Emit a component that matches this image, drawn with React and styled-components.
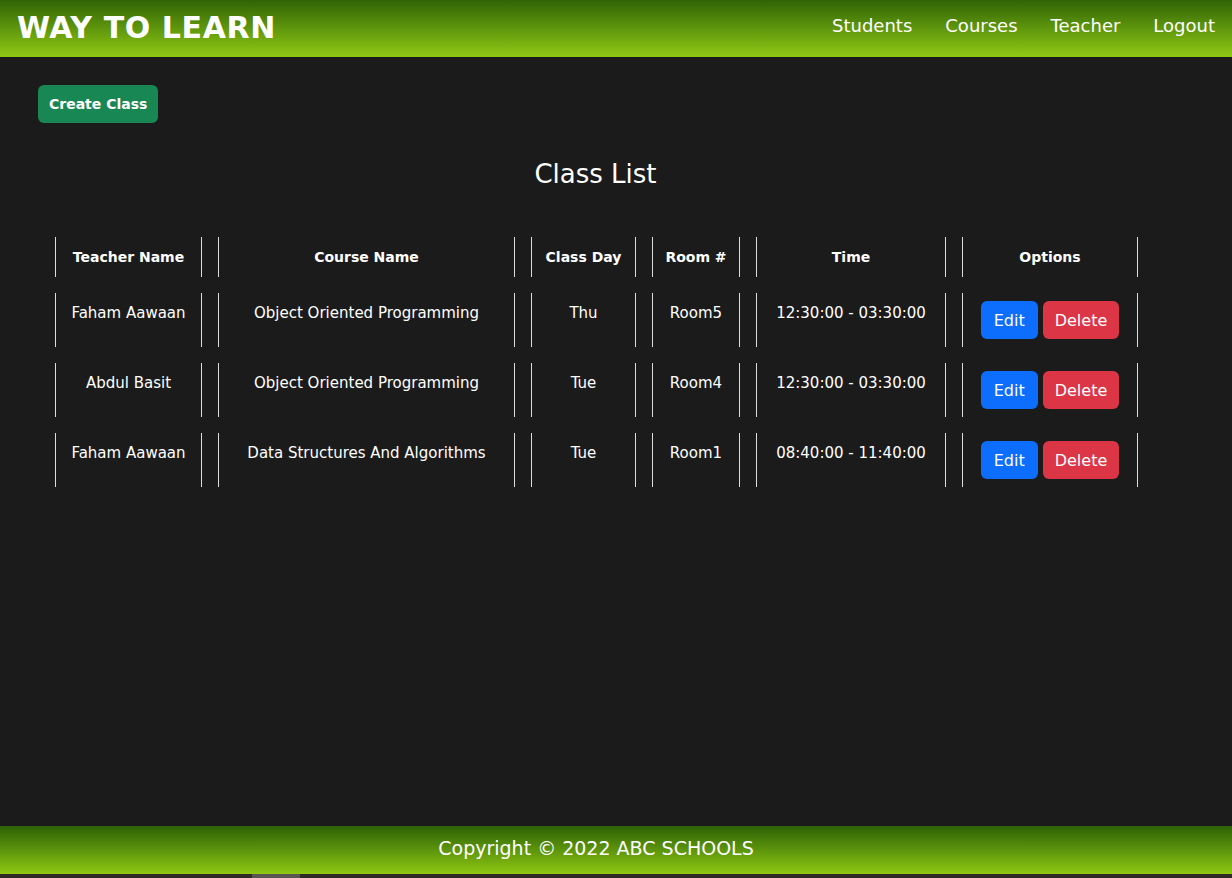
import React from 'react';
import styled, { createGlobalStyle } from 'styled-components';

const GlobalStyle = createGlobalStyle`
  html, body {
    margin: 0;
    padding: 0;
    background: #1b1b1b;
    font-family: 'Comic Sans MS', 'DejaVu Sans', sans-serif;
    color: #fff;
  }
`;

const Page = styled.div`
  min-height: 878px;
  display: flex;
  flex-direction: column;
`;

const Header = styled.header`
  height: 57px;
  display: flex;
  align-items: center;
  justify-content: space-between;
  padding: 0 17px;
  background: linear-gradient(to bottom, #2f6406, #90c914);
`;

const Brand = styled.div`
  font-size: 30px;
  font-weight: bold;
  letter-spacing: 0.6px;
  padding-bottom: 3px;
`;

const Nav = styled.nav`
  display: flex;
  gap: 33px;
  padding-bottom: 6px;
`;

const NavLink = styled.a`
  font-size: 18px;
  color: #fff;
  cursor: pointer;
`;

const Main = styled.main`
  flex: 1;
  padding: 28px 0 0 38px;
  width: 1115px;
`;

const Button = styled.button`
  font-family: inherit;
  font-size: ${({ $size }) => $size || 15}px;
  font-weight: ${({ $bold }) => ($bold ? 'bold' : 'normal')};
  color: #fff;
  border: none;
  border-radius: 6px;
  height: 38px;
  padding: 0 ${({ $pad }) => $pad || 12}px;
  background: ${({ $variant }) =>
    $variant === 'danger' ? '#dc3545' : $variant === 'primary' ? '#0d6efd' : '#198754'};
  cursor: pointer;
`;

const Title = styled.h2`
  margin: 36px 0 0;
  text-align: center;
  font-size: 26px;
  font-weight: normal;
`;

const Table = styled.table`
  margin-top: 32px;
  margin-left: 1px;
  width: 100%;
  border-collapse: separate;
  border-spacing: 16px 16px;
  table-layout: fixed;
`;

const Th = styled.th`
  border-left: 1px solid #ddd;
  border-right: 1px solid #ddd;
  height: 40px;
  padding: 0 4px;
  font-size: 14px;
  font-weight: bold;
  text-align: center;
  vertical-align: middle;
  box-sizing: border-box;
`;

const Td = styled.td`
  border-left: 1px solid #ddd;
  border-right: 1px solid #ddd;
  height: 54px;
  padding: 8px 4px;
  font-size: 15px;
  text-align: center;
  vertical-align: top;
  line-height: 24px;
  box-sizing: border-box;
`;

const Options = styled.div`
  display: flex;
  justify-content: center;
  gap: 5px;
`;

const Footer = styled.footer`
  height: 48px;
  display: flex;
  align-items: center;
  justify-content: center;
  padding: 0 40px 5px 0;
  box-sizing: border-box;
  font-size: 19px;
  background: linear-gradient(to bottom, #2c6206, #8ec713);
`;

const ScrollStrip = styled.div`
  height: 4px;
  background: #2e2a2a;
  padding-left: 252px;
`;

const Thumb = styled.div`
  width: 48px;
  height: 4px;
  background: #5a5555;
`;

const columns = [
  { label: 'Teacher Name', w: 147 },
  { label: 'Course Name', w: 297 },
  { label: 'Class Day', w: 105 },
  { label: 'Room #', w: 88 },
  { label: 'Time', w: 190 },
  { label: 'Options', w: 176 },
];

const classes = [
  { teacher: 'Faham Aawaan', course: 'Object Oriented Programming', day: 'Thu', room: 'Room5', time: '12:30:00 - 03:30:00' },
  { teacher: 'Abdul Basit', course: 'Object Oriented Programming', day: 'Tue', room: 'Room4', time: '12:30:00 - 03:30:00' },
  { teacher: 'Faham Aawaan', course: 'Data Structures And Algorithms', day: 'Tue', room: 'Room1', time: '08:40:00 - 11:40:00' },
];

export default function App() {
  return (
    <Page>
      <GlobalStyle />
      <Header>
        <Brand>WAY TO LEARN</Brand>
        <Nav>
          <NavLink>Students</NavLink>
          <NavLink>Courses</NavLink>
          <NavLink>Teacher</NavLink>
          <NavLink>Logout</NavLink>
        </Nav>
      </Header>
      <Main>
        <Button $size={14} $bold $pad={11}>Create Class</Button>
        <Title>Class List</Title>
        <Table>
          <colgroup>
            {columns.map((c) => (
              <col key={c.label} style={{ width: c.w }} />
            ))}
          </colgroup>
          <thead>
            <tr>
              {columns.map((c) => (
                <Th key={c.label}>{c.label}</Th>
              ))}
            </tr>
          </thead>
          <tbody>
            {classes.map((c, i) => (
              <tr key={i}>
                <Td>{c.teacher}</Td>
                <Td>{c.course}</Td>
                <Td>{c.day}</Td>
                <Td>{c.room}</Td>
                <Td>{c.time}</Td>
                <Td>
                  <Options>
                    <Button $variant="primary" $size={16} $pad={13}>Edit</Button>
                    <Button $variant="danger" $size={16} $pad={12}>Delete</Button>
                  </Options>
                </Td>
              </tr>
            ))}
          </tbody>
        </Table>
      </Main>
      <Footer>Copyright © 2022 ABC SCHOOLS</Footer>
      <ScrollStrip>
        <Thumb />
      </ScrollStrip>
    </Page>
  );
}
